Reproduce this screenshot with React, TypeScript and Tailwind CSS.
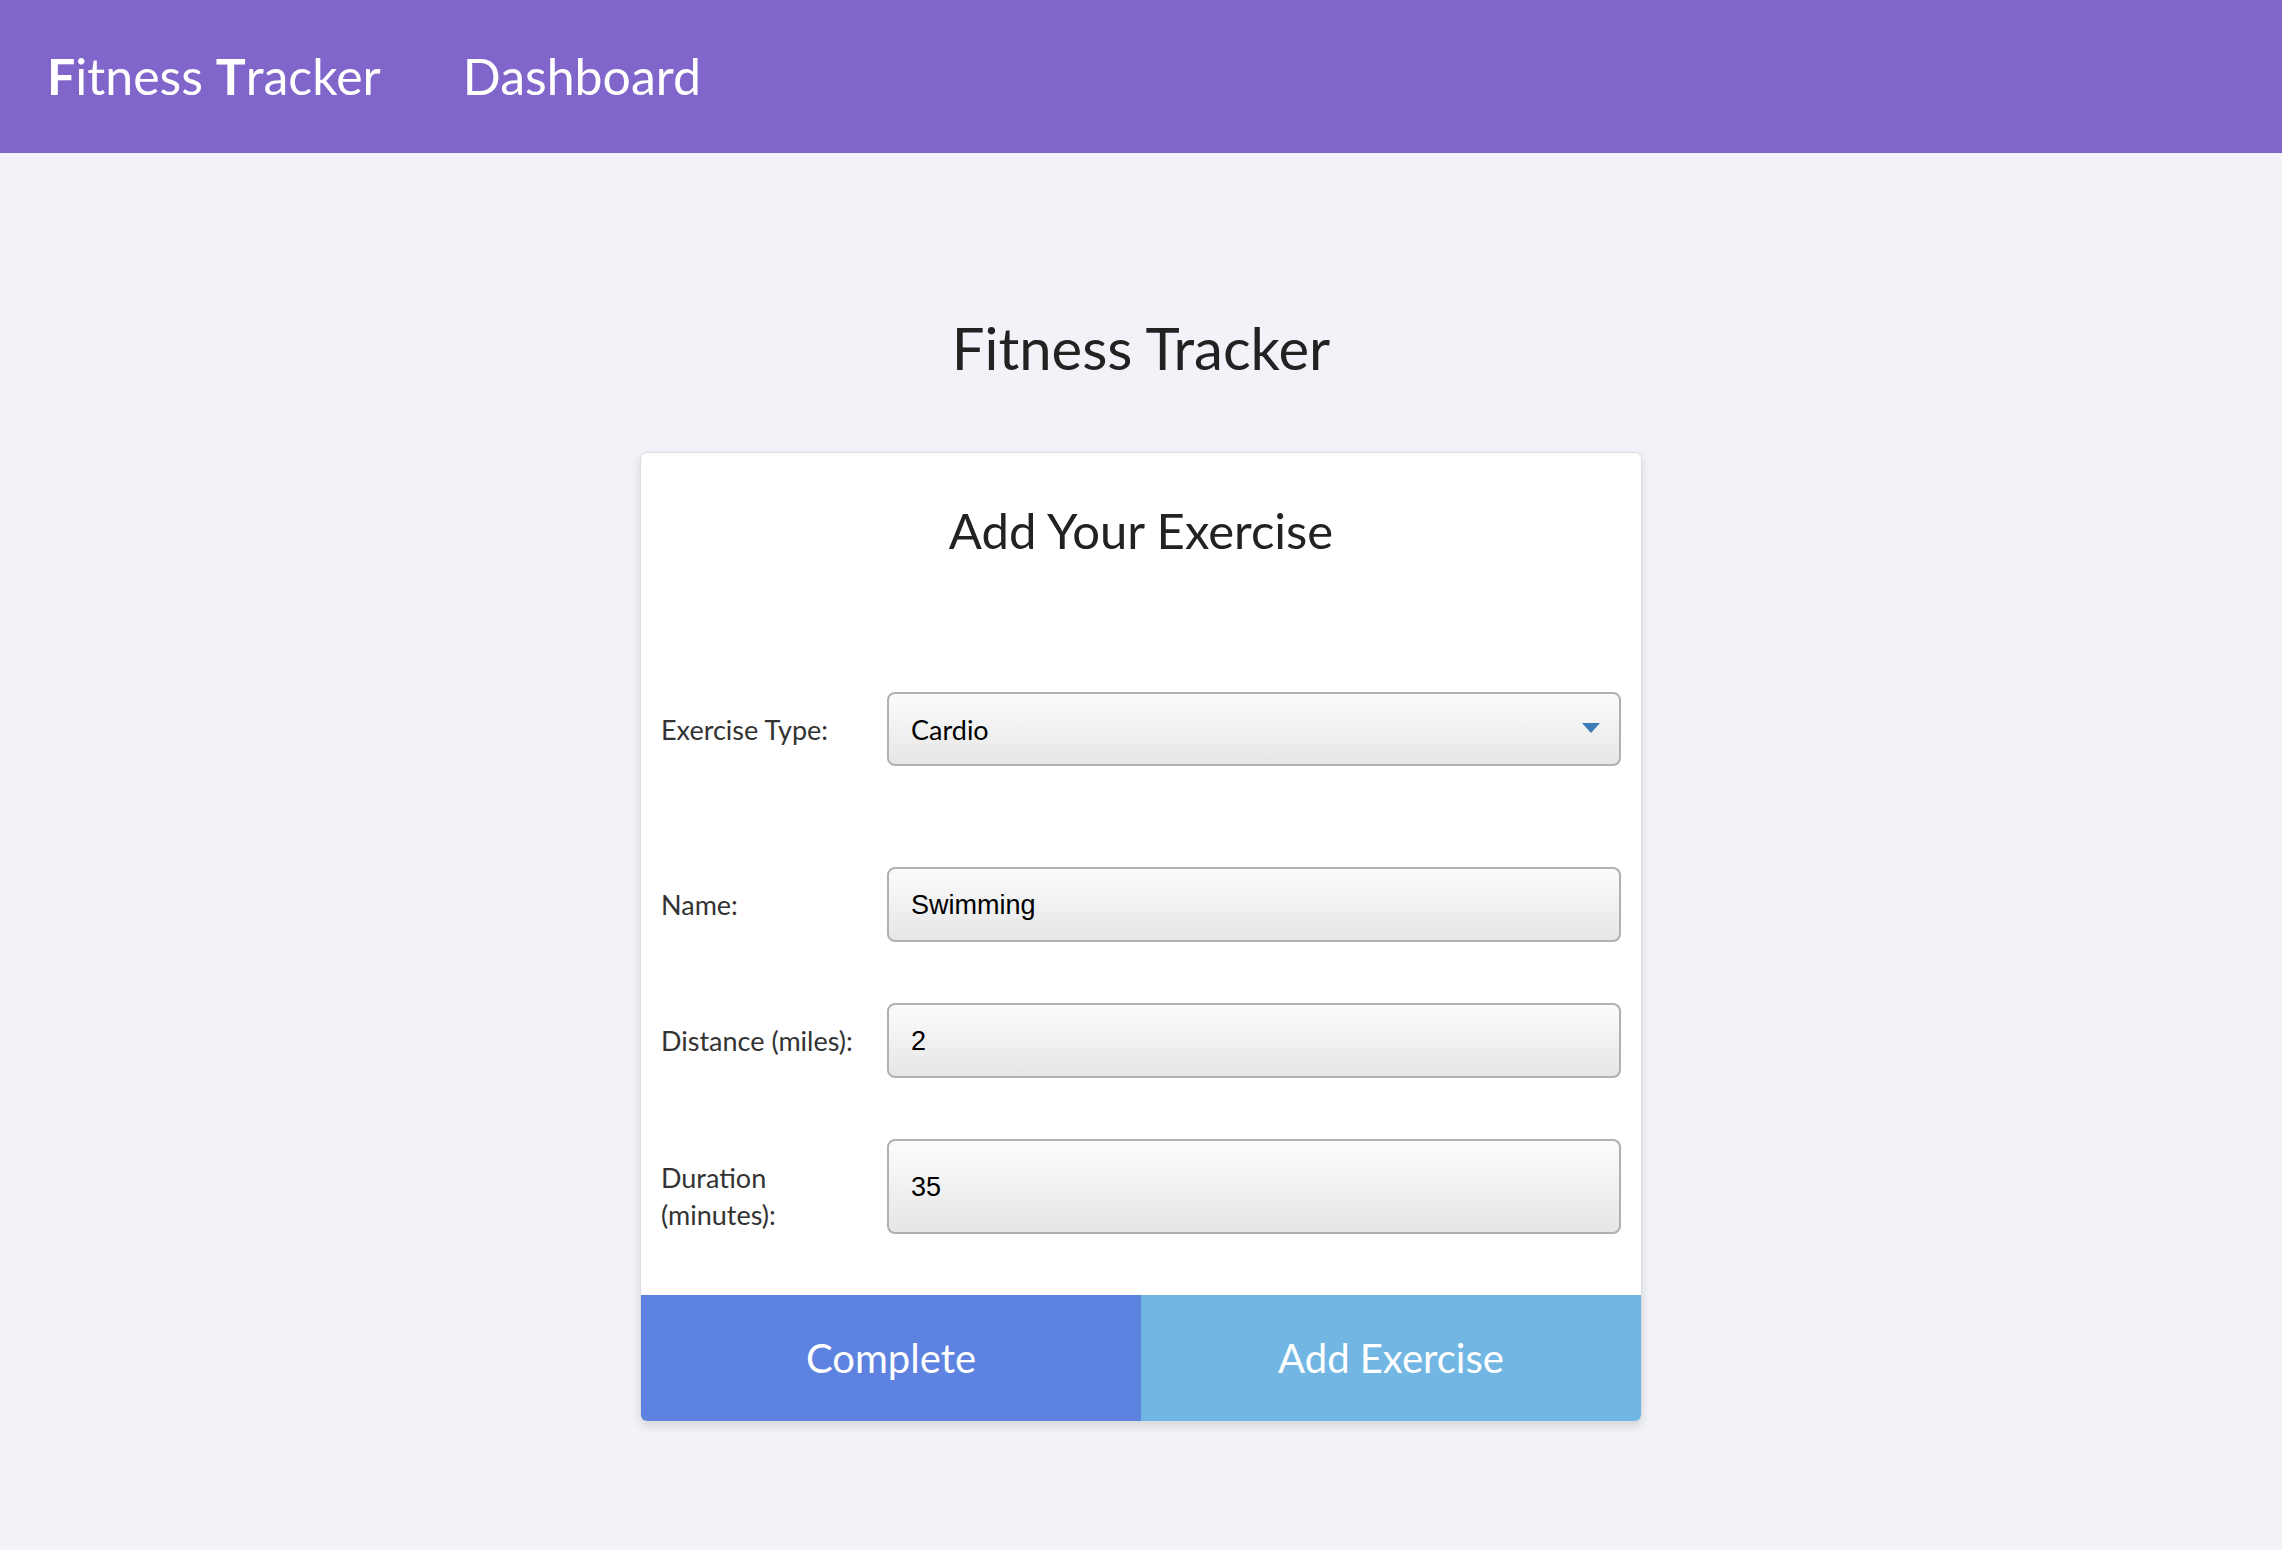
import React from 'react'

const fieldClass =
  "w-full h-full rounded-[8px] border-2 border-[#b0b0b0] bg-gradient-to-b from-[#fcfcfc] to-[#e6e6e6] pl-[22px] pt-[2px] text-[27px] text-black outline-none"

const Row = ({ label, height, children, labelClass = "" }: { label: React.ReactNode; height: string; children: React.ReactNode; labelClass?: string }) => (
  <div className={`flex items-center ${height}`}>
    <div className={`w-[226px] shrink-0 text-[27px] leading-[37px] text-[#333] ${labelClass}`}>{label}</div>
    <div className="flex-1 h-full">{children}</div>
  </div>
)

const App = () => {
  return (
    <div className="min-h-[1550px] bg-[#f2f3f8] font-['Lato',sans-serif]">
      <nav className="flex items-center h-[153px] bg-[#8066ca] px-[47px] text-white text-[50px]">
        <span><b className="font-bold">F</b>itness <b className="font-bold">T</b>racker</span>
        <span className="ml-[82px]">Dashboard</span>
      </nav>

      <div className="flex flex-col items-center pt-[166px]">
        <h1 className="text-[58px] leading-none text-[#222]">Fitness Tracker</h1>

        <div className="mt-[75px] w-[1002px] bg-white border border-[#dcdcdc] rounded-[7px] shadow-[0_4px_10px_rgba(0,0,0,0.12)] overflow-hidden">
          <h2 className="pt-[53px] text-center text-[49px] leading-none text-[#222]">Add Your Exercise</h2>

          <div className="px-[20px] pt-[137px] pb-[61px] flex flex-col">
            <Row label="Exercise Type:" height="h-[74px]">
              <div className="relative h-full">
                <select defaultValue="Cardio" className={`${fieldClass} appearance-none font-['Lato',sans-serif]`}>
                  <option>Cardio</option>
                  <option>Resistance</option>
                </select>
                <svg className="absolute right-[21px] top-[31px] pointer-events-none" width="18" height="10" viewBox="0 0 18 10">
                  <path d="M0 0 L18 0 L9 10 Z" fill="#3b7cb8" />
                </svg>
              </div>
            </Row>

            <div className="mt-[101px]">
              <Row label="Name:" height="h-[75px]">
                <input defaultValue="Swimming" className={`${fieldClass} font-['Liberation_Sans',Arial,sans-serif]`} />
              </Row>
            </div>

            <div className="mt-[61px]">
              <Row label="Distance (miles):" height="h-[75px]">
                <input defaultValue="2" className={`${fieldClass} font-['Liberation_Sans',Arial,sans-serif]`} />
              </Row>
            </div>

            <div className="mt-[61px]">
              <Row label={<>Duration<br />(minutes):</>} height="h-[95px]" labelClass="pt-[18px]">
                <input defaultValue="35" className={`${fieldClass} font-['Liberation_Sans',Arial,sans-serif]`} />
              </Row>
            </div>
          </div>

          <div className="flex h-[126px] text-white text-[40px]">
            <button className="flex-1 bg-[#5e82e0]">Complete</button>
            <button className="flex-1 bg-[#72b7e3]">Add Exercise</button>
          </div>
        </div>
      </div>
    </div>
  )
}

export default App
